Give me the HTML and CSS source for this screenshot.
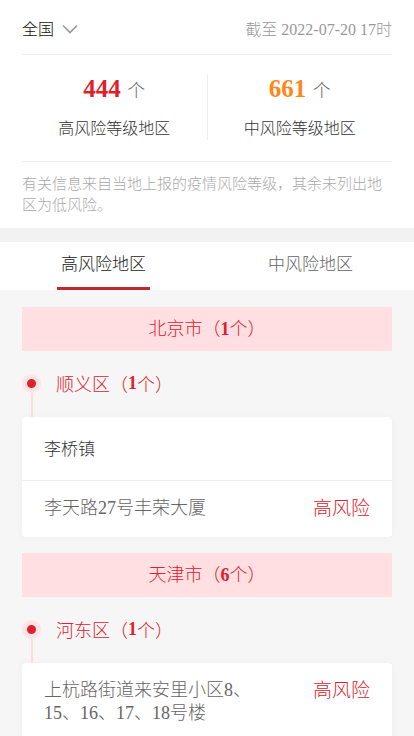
FILE: index.html
```html
<!DOCTYPE html>
<html lang="zh-CN">
<head>
    <meta charset="UTF-8">
    <meta name="viewport" content="width=device-width, initial-scale=1.0">
    <title>疫情风险等级查询</title>
    <link rel="stylesheet" href="styles.css">
</head>
<body>

<div class="summary">
    <div class="topbar">
        <div class="area">全国
            <svg class="arrow" width="16" height="10" viewBox="0 0 16 10"><path d="M1 1.5 L8 8.5 L15 1.5" fill="none" stroke="#999" stroke-width="1.6"/></svg>
        </div>
        <div class="update">截至 2022-07-20 17时</div>
    </div>
    <div class="stats">
        <div class="stat">
            <div class="count"><b class="high">444</b> 个</div>
            <div class="label">高风险等级地区</div>
        </div>
        <div class="stat">
            <div class="count"><b class="mid">661</b> 个</div>
            <div class="label">中风险等级地区</div>
        </div>
    </div>
    <p class="note">有关信息来自当地上报的疫情风险等级，其余未列出地区为低风险。</p>
</div>

<div class="gap"></div>

<div class="tabs">
    <div class="tab active">高风险地区</div>
    <div class="tab">中风险地区</div>
</div>

<div class="list">
    <div class="city">北京市（<b>1</b>个）</div>
    <div class="district"><span class="dot"></span>顺义区（<b>1</b>个）</div>
    <div class="card">
        <div class="row town">李桥镇</div>
        <div class="row">
            <span class="place">李天路27号丰荣大厦</span>
            <span class="level">高风险</span>
        </div>
    </div>

    <div class="city">天津市（<b>6</b>个）</div>
    <div class="district"><span class="dot"></span>河东区（<b>1</b>个）</div>
    <div class="card">
        <div class="row">
            <span class="place">上杭路街道来安里小区8、15、16、17、18号楼</span>
            <span class="level">高风险</span>
        </div>
    </div>
</div>

</body>
</html>
```

FILE: styles.css
```css
body {
    margin: 0;
    font-family: "Liberation Serif", "Noto Sans CJK SC", serif;
    font-weight: 300;
    background: #f6f6f6;
    color: #333;
}
b {
    font-weight: 700;
}
.summary {
    background: white;
    padding: 0 22px;
}
.topbar {
    display: flex;
    justify-content: space-between;
    align-items: center;
    height: 54px;
    border-bottom: 1px solid #eee;
}
.area {
    display: flex;
    align-items: center;
    font-size: 16px;
    color: #111;
    padding-top: 2px;
}
.arrow {
    margin-left: 8px;
    margin-top: 1px;
}
.update {
    font-size: 16px;
    color: #999;
    padding-top: 2px;
}
.stats {
    display: flex;
    padding: 19px 0 21px;
    border-bottom: 1px solid #eee;
}
.stat {
    flex: 1;
    text-align: center;
}
.stat:first-child {
    border-right: 1px solid #eee;
}
.count {
    font-size: 18px;
    color: #666;
    line-height: 30px;
}
.count b {
    font-size: 25px;
    margin-right: 2px;
}
.high {
    color: #e0202b;
}
.mid {
    color: #ff8717;
}
.label {
    font-size: 16px;
    margin-top: 12px;
    line-height: 22px;
}
.note {
    margin: 0;
    padding: 12px 0 12px;
    font-size: 15px;
    line-height: 21px;
    color: #aaa;
}
.gap {
    height: 14px;
    background: #f2f2f2;
}
.tabs {
    display: flex;
    background: white;
    height: 48px;
}
.tab {
    flex: 1;
    text-align: center;
    font-size: 17px;
    line-height: 46px;
    color: #666;
}
.tab.active {
    color: #222;
    position: relative;
}
.tab.active::after {
    content: "";
    position: absolute;
    left: 57px;
    width: 93px;
    bottom: 0;
    height: 3px;
    background: #c0282f;
}
.list {
    padding: 17px 22px 0;
}
.city {
    background: #ffdfe2;
    color: #e0202b;
    text-align: center;
    height: 44px;
    line-height: 44px;
    font-size: 18px;
}
.district {
    display: flex;
    align-items: center;
    height: 64px;
    margin-bottom: 2px;
    font-size: 18px;
    color: #e0202b;
    position: relative;
}
.district::after {
    content: "";
    position: absolute;
    left: 9px;
    top: 42px;
    width: 2px;
    height: 24px;
    background: #ffdadd;
}
.dot {
    width: 9px;
    height: 9px;
    border-radius: 50%;
    background: #e0202b;
    border: 5.5px solid #ffe3e6;
    margin-right: 15px;
}
.card {
    background: white;
    border-radius: 4px;
    box-shadow: 0 0 8px rgba(0, 0, 0, 0.04);
    margin-bottom: 16px;
}
.row {
    display: flex;
    justify-content: space-between;
    align-items: flex-start;
    padding: 16px 22px 17px;
    font-size: 18px;
    line-height: 23px;
    color: #666;
}
.row + .row {
    border-top: 1px solid #eee;
}
.row.town {
    font-size: 17px;
    color: #333;
    padding: 21px 22px 19px;
}
.place {
    max-width: 230px;
}
.level {
    font-size: 19px;
    color: #e0202b;
    flex-shrink: 0;
}
```
